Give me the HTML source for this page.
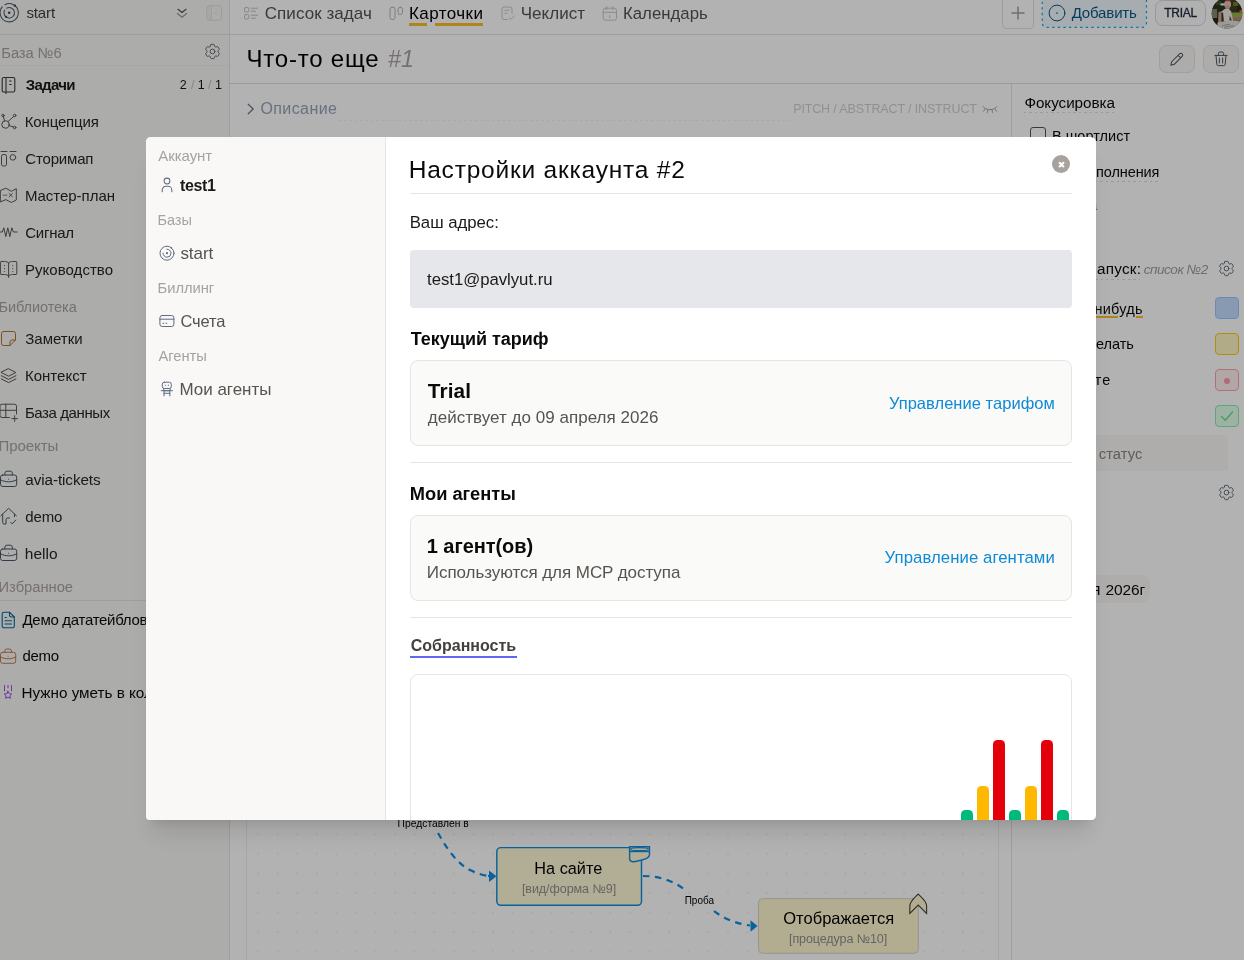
<!DOCTYPE html>
<html lang="ru"><head><meta charset="utf-8"><title>Настройки аккаунта</title>
<style>
*{box-sizing:border-box}
html,body{margin:0;padding:0}
body{width:1244px;height:960px;overflow:hidden;position:relative;background:#fff;font-family:"Liberation Sans",sans-serif;color:#000}
.abs,.t,svg.i{position:absolute}
.t{white-space:pre;line-height:1;margin:0;padding:0}
svg.i{overflow:visible;fill:none;stroke-linecap:round;stroke-linejoin:round}
#app{position:absolute;left:0;top:0;width:1244px;height:960px;overflow:hidden;will-change:transform}
#overlay{position:absolute;left:0;top:0;width:1244px;height:960px;background:rgba(0,0,0,.3)}
#modal{position:absolute;left:146px;top:137px;width:950px;height:683px;background:#fff;border-radius:5px 5.500px 4.500px 4px;box-shadow:0 20px 25px -5px rgba(0,0,0,.1),0 8px 10px -6px rgba(0,0,0,.1);overflow:hidden}
#mtext{position:absolute;left:0;top:0;width:1244px;height:960px;pointer-events:none;will-change:transform}
.dsh{height:1px;background:repeating-linear-gradient(90deg,#e0dedc 0,#e0dedc 2.500px,transparent 2.500px,transparent 5.500px)}
.hr{position:absolute;height:1px;background:#e7e5e4}
.card{position:absolute;left:410px;width:662px;background:#fafaf9;border:1px solid #e7e5e4;border-radius:8px}
</style></head>
<body>
<div id="app">
<svg width="0" height="0" style="position:absolute"><defs><g id="gearp"><path d="M9.594 3.94c.09-.542.56-.94 1.11-.94h2.593c.55 0 1.02.398 1.11.94l.213 1.281c.063.374.313.686.645.87.074.04.147.083.22.127.325.196.72.257 1.075.124l1.217-.456a1.125 1.125 0 0 1 1.37.49l1.296 2.247a1.125 1.125 0 0 1-.26 1.431l-1.003.827c-.293.241-.438.613-.43.992a7.723 7.723 0 0 1 0 .255c-.008.378.137.75.43.991l1.004.827c.424.35.534.955.26 1.43l-1.298 2.247a1.125 1.125 0 0 1-1.369.491l-1.217-.456c-.355-.133-.75-.072-1.076.124a6.47 6.470 0 0 1-.22.128c-.331.183-.581.495-.644.869l-.213 1.281c-.09.543-.56.94-1.11.94h-2.594c-.55 0-1.019-.398-1.11-.94l-.213-1.281c-.062-.374-.312-.686-.644-.87a6.52 6.520 0 0 1-.22-.127c-.325-.196-.72-.257-1.076-.124l-1.217.456a1.125 1.125 0 0 1-1.369-.49l-1.297-2.247a1.125 1.125 0 0 1 .26-1.431l1.004-.827c.292-.24.437-.613.43-.991a6.932 6.932 0 0 1 0-.255c.007-.38-.138-.751-.43-.992l-1.004-.827a1.125 1.125 0 0 1-.26-1.43l1.297-2.247a1.125 1.125 0 0 1 1.37-.491l1.216.456c.356.133.751.072 1.076-.124.072-.044.146-.086.22-.128.332-.183.582-.495.644-.869l.214-1.280Z"/><circle cx="12" cy="12" r="3"/></g></defs></svg>
<!-- sidebar -->
<div class="abs" style="left:0;top:0;width:230px;height:960px;background:#f7f6f4;border-right:1px solid #e4e2e0"></div>
<div class="abs" style="left:0;top:34px;width:1244px;height:1px;background:#e4e2e0"></div>
<div class="abs" style="left:0;top:65px;width:229px;height:1px;background:rgba(0,0,0,.025)"></div>
<div class="abs" style="left:0;top:600px;width:229px;height:1px;background:#e4e2e0"></div>
<div class="abs" style="left:230px;top:83px;width:1014px;height:1px;background:#e0dedc"></div>
<div class="abs" style="left:1011px;top:84px;width:1px;height:876px;background:#e4e2e0"></div>
<!-- canvas -->
<div class="abs" id="canvas" style="left:246px;top:150px;width:753px;height:820px;border:1px solid #eeecea;background-image:radial-gradient(circle,#bcbcbc 0.45px,transparent 0.75px);background-size:19.58px 19.55px;background-position:1.3px 9px"></div>
<!-- sidebar icons -->
<svg class="i" style="left:0;top:0" width="20" height="24" viewBox="0 0 20 24" stroke="#4f5b6e" stroke-width="1.050"><path d="M4.930 4.710A9.100 9.100 0 1 1 2.230 6.900"/><path d="M6.550 8.160A5.300 5.300 0 1 1 4.610 10.100"/><circle cx="9.200" cy="12.750" r="1.250" fill="#334155" stroke="none"/><circle cx="14.900" cy="5.700" r="1.150" fill="#334155" stroke="none"/><circle cx="6.100" cy="16.800" r="1.100" fill="#334155" stroke="none"/></svg>
<svg class="i" style="left:176px;top:8px" width="12" height="11" viewBox="0 0 12 11" stroke-width="1.2"><path d="M2 1.300l4 3.200 4-3.200" stroke="#475569"/><path d="M1.400 5.500l4.600 3.800 4.600-3.800" stroke="#9c9893"/></svg>
<svg class="i" style="left:206px;top:5px" width="16" height="16" viewBox="0 0 16 16" stroke="#e2e0de" stroke-width="1"><path d="M5.500 .7h-2.500a2.300 2.300 0 0 0-2.300 2.300v10a2.300 2.300 0 0 0 2.300 2.300h2.500z" fill="#f1efed" stroke="none"/><rect x=".7" y=".7" width="14.800" height="14.600" rx="2.800"/><path d="M5.500 .7v14.600M10.800 6.200L9.200 8.100l1.600 1.900" stroke-width=".9"/></svg>
<svg class="i" style="left:202.600px;top:42.400px" width="19" height="19" viewBox="0 0 24 24" stroke="#556070" stroke-width="1.150"><use href="#gearp"/></svg>
<!-- notebook -->
<svg class="i" style="left:1px;top:76px" width="16" height="19" viewBox="0 0 16 19" stroke="#403c38" stroke-width="1.100"><rect x="1.2" y="1.5" width="12.6" height="14.5" rx="1.6"/><path d="M5 1.500v16M8.600 5h1.600M8.600 8.500h1.600"/></svg>
<!-- concept -->
<svg class="i" style="left:0;top:113px" width="18" height="18" viewBox="0 0 18 18" stroke="#5c5853" stroke-width="1"><circle cx="5.500" cy="11.5" r="3.7"/><circle cx="3" cy="2.500" r="1.200"/><circle cx="14.6" cy="2.500" r="1.300"/><circle cx="14.600" cy="14.5" r="1.300"/><path d="M3.400 3.700L4.500 7.900M13.700 3.400L8 8.700M9.100 12.500l4.300 1.600"/></svg>
<!-- storymap -->
<svg class="i" style="left:0;top:150px" width="18" height="18" viewBox="0 0 18 18" stroke="#5c5853" stroke-width="1"><path d="M1 1.500h6M10 1.500h6"/><rect x="1.500" y="4.500" width="5" height="11.500" rx="1.800"/><circle cx="12.900" cy="7.400" r="2.800"/></svg>
<!-- master plan -->
<svg class="i" style="left:0;top:187px" width="18" height="18" viewBox="0 0 18 18" stroke="#5c5853" stroke-width="1"><path d="M.7 3.400l5.100-2.200 5.600 3.100 4.900-2.600v11.300l-4.900 2.500-5.600-2.900-5.100 2.200z"/><path d="M3.300 8.200h1.100M5.700 8.200h1.100M9.100 6.500l3.300 3.300M12.400 6.500l-3.300 3.300" stroke-width=".9"/></svg>
<!-- signal -->
<svg class="i" style="left:0;top:226px" width="18" height="12" viewBox="0 0 18 12" stroke="#5c5853" stroke-width="1"><path d="M.3 6h2l1.500-4.200 2 8.800 2-8.800 2 8.800 2-8.800L13.500 6h3.700"/></svg>
<!-- book -->
<svg class="i" style="left:0;top:260px" width="18" height="19" viewBox="0 0 18 19" stroke="#5c5853" stroke-width="1"><path d="M8.600 3v14.500M8.600 3c-1-1-2.400-1.500-4-1.500h-3.500c-.4 0-.7.300-.7.700v11.600c0 .400.300.700.700.700h3.500c1.600 0 3 .5 4 1.500M8.600 3c1-1 2.400-1.500 4-1.500h3.500c.4 0 .7.300.7.700v11.600c0 .400-.3.700-.7.700h-3.500c-1.600 0-3 .5-4 1.500"/><path d="M4.500 5.500v.1M4.500 8.500v.1M4.500 11.500v.1M12.800 5.500v.1M12.800 8.500v.1M12.800 11.500v.1" stroke-width="1.200"/></svg>
<!-- notes -->
<svg class="i" style="left:0;top:330px" width="18" height="18" viewBox="0 0 18 18" stroke="#b4712f" stroke-width="1"><path d="M3.500 1.500h10a2 2 0 0 1 2 2v6.500l-5.500 5.500h-6.500a2 2 0 0 1-2-2v-10a2 2 0 0 1 2-2z"/><path d="M15.500 10h-3.500a2 2 0 0 0-2 2v3.500"/></svg>
<!-- layers -->
<svg class="i" style="left:0;top:367px" width="18" height="18" viewBox="0 0 18 18" stroke="#5c5853" stroke-width="1"><path d="M8.600 1.800l7.300 3.700-7.300 3.700-7.300-3.700z"/><path d="M1.300 8.700l7.300 3.700 7.300-3.700M1.300 11.900l7.300 3.700 7.300-3.700"/></svg>
<!-- table plus -->
<svg class="i" style="left:0;top:403px" width="19" height="20" viewBox="0 0 19 20" stroke="#57534e" stroke-width=".95"><path d="M16.500 11v-7.800a2 2 0 0 0-2-2h-12.500a2 2 0 0 0-2 2v9.300a2 2 0 0 0 2 2h7.500M0 7.300h16.500M5.800 1.200v13.300M11.800 15.600h5.700M14.650 12.700v5.800"/></svg>
<!-- briefcase 1 -->
<svg class="i" style="left:0;top:470px" width="18" height="18" viewBox="0 0 18 18" stroke="#475569" stroke-width="1"><rect x=".5" y="5" width="16.200" height="11.500" rx="2.200"/><path d="M4.900 5v-1.800a2 2 0 0 1 2-2h3.400a2 2 0 0 1 2 2v1.800M.5 9.800c2.500 1.300 5.200 2 8.100 2s5.600-.7 8.100-2M8.600 9.200v.1"/></svg>
<!-- home -->
<svg class="i" style="left:0;top:507px" width="18" height="19" viewBox="0 0 18 19" stroke="#475569" stroke-width="1"><path d="M.8 8.800l7.800-7.500 7.800 7.500M2.700 7.200v8.300a1.500 1.500 0 0 0 1.500 1.500h1.800v-4.500a1.500 1.500 0 0 1 1.500-1.500h2M10.500 15.200l1.700 1.700 3.500-3.800M14.500 7.200v2.500"/></svg>
<!-- briefcase 2 -->
<svg class="i" style="left:0;top:544.300px" width="18" height="18" viewBox="0 0 18 18" stroke="#475569" stroke-width="1"><rect x=".5" y="5" width="16.200" height="11.500" rx="2.200"/><path d="M4.900 5v-1.800a2 2 0 0 1 2-2h3.400a2 2 0 0 1 2 2v1.800M.5 9.800c2.500 1.300 5.200 2 8.100 2s5.600-.7 8.100-2M8.600 9.200v.1"/></svg>
<!-- doc blue -->
<svg class="i" style="left:1px;top:611px" width="16" height="18" viewBox="0 0 16 18" stroke="#0369a1" stroke-width="1.100"><path d="M3 1.200h5.500l4.800 4.800v9a1.800 1.800 0 0 1-1.800 1.800h-8.500a1.800 1.800 0 0 1-1.800-1.800v-12a1.800 1.800 0 0 1 1.800-1.800z"/><path d="M8.500 1.200v3a1.800 1.800 0 0 0 1.800 1.800h3M4 6.500h1.500M4 9.800h6.500M4 13h6.500"/></svg>
<!-- briefcase brown -->
<svg class="i" style="left:0;top:648px" width="17" height="17" viewBox="0 0 17 17" stroke="#c07a52" stroke-width="1"><rect x=".5" y="4.300" width="15.200" height="11" rx="2.200"/><path d="M4.800 4.300v-1.300a2 2 0 0 1 2-2h2.600a2 2 0 0 1 2 2v1.300M.5 9c2.400 1.200 4.900 1.800 7.600 1.800s5.200-.6 7.600-1.800M8.100 8.200v.1"/></svg>
<!-- medal purple -->
<svg class="i" style="left:3px;top:684px" width="10" height="16" viewBox="0 0 10 16" stroke="#a24bf0" stroke-width="1"><path d="M1.500 1.500v5.300M5 1.500v2.200M8.500 1.500v5.300"/><path d="M5 7.200l1.200 2.400 2.600.4-1.900 1.800.5 2.600-2.400-1.300-2.400 1.300.5-2.600-1.900-1.800 2.600-.4z"/></svg>
<!-- header icons -->
<svg class="i" style="left:244px;top:7px" width="15" height="13" viewBox="0 0 15 13" stroke="#c4c0bb" stroke-width="1"><rect x=".5" y=".6" width="4.300" height="4.300" rx="1"/><rect x=".5" y="7.600" width="4.300" height="4.300" rx="1"/><path d="M7.400 1.200h6.300M7.400 4.200h4M7.400 8.200h6.300M7.400 11.200h4"/></svg>
<svg class="i" style="left:389px;top:6px" width="15" height="15" viewBox="0 0 15 15" stroke="#b8b4af" stroke-width="1"><rect x="1" y="1.300" width="5" height="12.200" rx="2"/><rect x="9.100" y="1.300" width="4.400" height="7.200" rx="2"/></svg>
<svg class="i" style="left:501px;top:6px" width="15" height="15" viewBox="0 0 15 15" stroke="#cbc7c3" stroke-width="1"><path d="M11 7.500v-4.500a2 2 0 0 0-2-2h-6a2 2 0 0 0-2 2v8.500a2 2 0 0 0 2 2h3.500M3.800 4.300h4.400M3.800 7.200h2.400M8.300 11.700l1.700 1.700 3.300-3.500"/></svg>
<svg class="i" style="left:602px;top:6px" width="16" height="15" viewBox="0 0 16 15" stroke="#cbc7c3" stroke-width="1"><rect x="1.200" y="2.200" width="13.300" height="12" rx="2.200"/><path d="M1.200 6.300h13.300M4.800 .6v3M10.900 .6v3M7.800 9.500v2"/></svg>
<div class="abs" style="left:409px;top:23px;width:18px;height:2.500px;background:#fbbf24"></div>
<div class="abs" style="left:435px;top:23px;width:48px;height:2.500px;background:#fbbf24"></div>
<!-- plus btn -->
<div class="abs" style="left:1002px;top:-8px;width:32.200px;height:36.900px;border:1px solid #e3e1de;border-radius:4px;background:transparent"></div>
<svg class="i" style="left:1012px;top:7px" width="12" height="12" viewBox="0 0 12 12" stroke="#9aa0aa" stroke-width="1.500" stroke-linecap="butt"><path d="M6 0v12M0 6h12"/></svg>
<!-- add btn -->
<svg class="abs" style="left:1036px;top:-10px;overflow:visible" width="116" height="44" viewBox="1036 -10 116 44"><rect x="1042.200" y="-8" width="104.300" height="35.400" rx="4.500" fill="#eff7fc" stroke="#00aaf5" stroke-width="1.200" stroke-dasharray="2.300 3.300" stroke-dashoffset="1"/></svg>
<svg class="i" style="left:1047.800px;top:4px" width="18" height="18" viewBox="0 0 18 18" stroke="#075985" stroke-width="1"><circle cx="9" cy="9" r="7.900"/><circle cx="9" cy="9.100" r=".8" fill="#075985" stroke="none"/></svg>
<!-- trial -->
<div class="abs" style="left:1155.300px;top:0;width:51.200px;height:25.700px;border:1px solid #d4d8e2;border-radius:7.500px;background:#fdfdfd"></div>
<!-- avatar -->
<svg class="abs" style="left:1211px;top:-3px" width="33" height="33" viewBox="1211 -3 33 33"><defs><clipPath id="av"><circle cx="1227" cy="13.300" r="15.300"/></clipPath></defs><g clip-path="url(#av)"><rect x="1211" y="-3" width="33" height="33" fill="#3a3f28"/><g style="filter:blur(.55px)"><rect x="1211" y="-3" width="14" height="14" fill="#2c3323"/><rect x="1216" y="1" width="5" height="4" fill="#46552a"/><rect x="1231" y="-3" width="13" height="16" fill="#3b3d24"/><rect x="1233" y="2" width="5" height="4" fill="#6b7a2e"/><rect x="1237" y="6" width="4" height="5" fill="#2a2a1c"/><rect x="1232" y="12.500" width="11" height="4.500" fill="#93b04a"/><rect x="1232" y="17" width="11" height="3.800" fill="#b08a76"/><rect x="1239.500" y="10.200" width="3" height="2.500" fill="#ff6420"/><rect x="1211" y="9" width="6" height="10" fill="#8b8170"/><rect x="1213" y="18" width="7" height="9" fill="#2b2119"/><rect x="1220.500" y="3.300" width="4.500" height="2.200" fill="#f0f0f0"/><rect x="1224.300" y=".5" width="6.700" height="7.500" rx="3" fill="#dcc6ba"/><rect x="1225.500" y="5.500" width="4" height="3.500" fill="#cbb09f"/><rect x="1225.800" y="-3" width="4.500" height="4.300" fill="#e6392f"/><path d="M1221.500 11.500l3-2.500h4.500l2.500 3 1.500 9h-12z" fill="#eee8e2"/><path d="M1218.500 12.500l3-1.500 1 13h-4.500z" fill="#c4a58c"/><path d="M1221.500 13l1.500-.5 1 10.500h-2.500z" fill="#3d3027"/><path d="M1229.800 15.500l2.500 6h-3z" fill="#54463a"/><path d="M1217.500 22.500l12-2.300 12 1.300v9h-24z" fill="#dededa"/><path d="M1222 25.500l8-1.200M1224 27.200l10-1.500" stroke="#8a8a86" stroke-width=".7"/></g></g></svg>
<!-- edit / trash -->
<div class="abs" style="left:1159.400px;top:45.200px;width:35.300px;height:27.600px;border:1px solid #e1e4ea;border-radius:7px;background:#f8f6f4"></div>
<svg class="i" style="left:1167.600px;top:51.700px" width="16" height="16" viewBox="-8 -8 16 16" stroke="#4b5563" stroke-width="1"><g transform="rotate(45)"><path d="M-1.850 -6.900a1.850 1.850 0 0 1 3.700 0v11.200l-1.850 3-1.850-3zM-1.850 -4.800h3.700"/></g></svg>
<div class="abs" style="left:1203.300px;top:45.200px;width:35.300px;height:27.600px;border:1px solid #e1e4ea;border-radius:7px;background:#f8f6f4"></div>
<svg class="i" style="left:1213px;top:50px" width="16" height="18" viewBox="0 0 16 18" stroke="#4b5563" stroke-width="1"><path d="M1.900 5.400h12.200M5.400 5.400v-1.900a1.500 1.500 0 0 1 1.500-1.500h2.200a1.500 1.500 0 0 1 1.500 1.500v1.900M3 5.400l.8 8.800a1.500 1.500 0 0 0 1.500 1.400h5.400a1.500 1.500 0 0 0 1.500-1.400l.8-8.800M6.350 8v5M9.650 8v5" /></svg>
<!-- description row -->
<svg class="i" style="left:247px;top:103px" width="8" height="12" viewBox="0 0 8 12" stroke="#64748b" stroke-width="1.200"><path d="M1.200 1.200l5 4.800-5 4.800"/></svg>
<div class="abs dsh" style="left:338px;top:120px;width:452px;opacity:.4"></div>
<svg class="i" style="left:982px;top:105px" width="16" height="9" viewBox="0 0 16 9" stroke="#9aa5b8" stroke-width="1"><path d="M1 1.500c1.500 2 4 3.200 7 3.200s5.500-1.200 7-3.200M3 4l-1.500 2.200M6 5l-.6 2.500M10 5l.6 2.500M13 4l1.500 2.200"/></svg>
<!-- right panel -->
<div class="abs dsh" style="left:1024px;top:111.500px;width:92px"></div>
<div class="abs" style="left:1030px;top:127px;width:16px;height:16px;border:1.200px solid #475569;border-radius:3px"></div>
<div class="abs dsh" style="left:1040px;top:181px;width:119px"></div>
<div class="abs dsh" style="left:1084px;top:278.500px;width:56px"></div>
<div class="abs" style="left:1080px;top:316px;width:38px;height:2px;background:#fbbf24"></div>
<div class="abs" style="left:1136px;top:316px;width:7px;height:2px;background:#fbbf24"></div>
<svg class="i" style="left:1216.700px;top:259.400px" width="19" height="19" viewBox="0 0 24 24" stroke="#556070" stroke-width="1.150"><use href="#gearp"/></svg>
<svg class="i" style="left:1216.500px;top:483.300px" width="19" height="19" viewBox="0 0 24 24" stroke="#556070" stroke-width="1.150"><use href="#gearp"/></svg>
<div class="abs" style="left:1215px;top:297px;width:24px;height:22px;border:1.300px solid #9fc6ff;border-radius:4px;background:#c3dcff"></div>
<div class="abs" style="left:1215px;top:333px;width:24px;height:22px;border:1.300px solid #facc15;border-radius:4px;background:#fff5c2"></div>
<div class="abs" style="left:1215px;top:369px;width:24px;height:22px;border:1.300px solid #fda4af;border-radius:4px;background:#ffeef0"></div>
<div class="abs" style="left:1224px;top:378px;width:6px;height:6px;border-radius:3px;background:#fb9aaa"></div>
<div class="abs" style="left:1215px;top:405px;width:24px;height:22px;border:1.300px solid #86efac;border-radius:4px;background:#e0ffe8"></div>
<svg class="i" style="left:1220px;top:410px" width="14" height="12" viewBox="0 0 14 12" stroke="#6fdc8c" stroke-width="1.400"><path d="M1.500 6.500l3.800 3.800 7.200-8.300"/></svg>
<div class="abs" style="left:1040px;top:435px;width:188px;height:36px;background:#f9f8f6;border-radius:3px"></div>
<div class="abs" style="left:1040px;top:575px;width:110px;height:28px;background:#f9f8f7;border-radius:9px"></div>
<!-- canvas nodes -->
<svg class="abs" style="left:230px;top:800px;overflow:visible" width="790" height="160" viewBox="230 800 790 160" fill="none">
<path d="M438 833c8 14 18 30 32 37 8 4 16 6 22 6.300" stroke="#0f8de0" stroke-width="2.200" stroke-dasharray="6.500 5.500"/>
<path d="M489 870.500l7.500 5.700-7.500 5.700z" fill="#0f8de0"/>
<path d="M488 876h5" stroke="#0f8de0" stroke-width="2"/>
<rect x="496.800" y="847.600" width="144.700" height="57.700" rx="4" fill="#fff9d6" stroke="#0f8de0" stroke-width="1.450"/>
<path d="M629.600 846.700h19.900v7.600c0 3.400-4 5.100-8.500 5.900-3.500.7-6 1.900-8.300 1.500a3.200 3.200 0 0 1-3.100-3.200z" fill="#fff9d6" stroke="#0f8de0" stroke-width="1.400"/>
<ellipse cx="639.550" cy="849.200" rx="8.800" ry="1.500" stroke="#0f8de0" stroke-width="1.200"/><path d="M629.600 851.500h19.900" stroke="#0f8de0" stroke-width="1.400"/>
<path d="M643 876c14 0 30 4 42 14" stroke="#0f8de0" stroke-width="2.200" stroke-dasharray="6.500 5.500"/>
<path d="M714 911c10 8 24 13 36 14.500" stroke="#0f8de0" stroke-width="2.200" stroke-dasharray="6.500 5.500"/>
<path d="M750.500 920.300l7 5.700-7 5.700z" fill="#0f8de0"/>
<rect x="758.500" y="898.700" width="159.800" height="54.600" rx="4" fill="#fff8d0" stroke="#d6d4cc" stroke-width="1"/>
<path d="M918.200 894.100c2.800 3 8.400 6.800 8.400 12v7.300l-8.400-8.400-8.400 8.400v-7.300c0-5.200 5.600-9 8.400-12z" fill="#fff8d0" stroke="#44403c" stroke-width="1.100" stroke-linejoin="miter"/>
</svg>

<span class="t" style="left:26.40px;top:5.00px;font-size:15.0px;color:#44403c;letter-spacing:-0.101px;">start</span>
<span class="t" style="left:1.30px;top:46.00px;font-size:14.75px;color:#a8a29e;letter-spacing:-0.084px;">База №6</span>
<span class="t" style="left:25.70px;top:77.00px;font-size:15.0px;color:#1c1917;font-weight:700;letter-spacing:-0.688px;">Задачи</span>
<span class="t" style="left:179.70px;top:79.00px;font-size:12.5px;color:#1c1917;letter-spacing:-0.300px;">2</span>
<span class="t" style="left:191.00px;top:79.00px;font-size:12.5px;color:#c4c0bc;letter-spacing:-0.500px;">/</span>
<span class="t" style="left:197.80px;top:79.00px;font-size:12.5px;color:#1c1917;letter-spacing:-2.300px;">1</span>
<span class="t" style="left:208.00px;top:79.00px;font-size:12.5px;color:#c4c0bc;letter-spacing:-0.300px;">/</span>
<span class="t" style="left:215.00px;top:79.00px;font-size:12.5px;color:#1c1917;letter-spacing:-2.000px;">1</span>
<span class="t" style="left:24.70px;top:114.00px;font-size:15.0px;color:#292524;letter-spacing:-0.140px;">Концепция</span>
<span class="t" style="left:25.30px;top:151.00px;font-size:15.0px;color:#292524;letter-spacing:-0.179px;">Сторимап</span>
<span class="t" style="left:24.90px;top:188.00px;font-size:15.0px;color:#292524;letter-spacing:-0.030px;">Мастер-план</span>
<span class="t" style="left:25.30px;top:225.00px;font-size:15.0px;color:#292524;letter-spacing:-0.262px;">Сигнал</span>
<span class="t" style="left:24.90px;top:262.00px;font-size:15.0px;color:#292524;letter-spacing:0.049px;">Руководство</span>
<span class="t" style="left:-1.50px;top:300.00px;font-size:14.5px;color:#a8a29e;letter-spacing:-0.064px;">Библиотека</span>
<span class="t" style="left:25.30px;top:331.00px;font-size:15.0px;color:#292524;letter-spacing:0.001px;">Заметки</span>
<span class="t" style="left:24.90px;top:368.00px;font-size:15.0px;color:#292524;letter-spacing:0.023px;">Контекст</span>
<span class="t" style="left:24.90px;top:405.00px;font-size:15.0px;color:#292524;letter-spacing:-0.405px;">База данных</span>
<span class="t" style="left:-1.50px;top:438.00px;font-size:15.0px;color:#a8a29e;letter-spacing:-0.068px;">Проекты</span>
<span class="t" style="left:25.30px;top:472.00px;font-size:15.25px;color:#292524;letter-spacing:-0.086px;">avia-tickets</span>
<span class="t" style="left:25.30px;top:509.00px;font-size:15.0px;color:#292524;letter-spacing:-0.160px;">demo</span>
<span class="t" style="left:24.80px;top:546.00px;font-size:15.5px;color:#292524;letter-spacing:0.018px;">hello</span>
<span class="t" style="left:-1.50px;top:580.00px;font-size:14.75px;color:#a8a29e;letter-spacing:-0.031px;">Избранное</span>
<span class="t" style="left:22.50px;top:612.00px;font-size:15.0px;color:#0c0a09;letter-spacing:-0.294px;">Демо дататейблов</span>
<span class="t" style="left:22.50px;top:648.00px;font-size:15.0px;color:#0c0a09;letter-spacing:-0.327px;">demo</span>
<span class="t" style="left:21.50px;top:685.00px;font-size:15.25px;color:#0c0a09;letter-spacing:-0.004px;">Нужно уметь в кол</span>
<span class="t" style="left:264.70px;top:5.00px;font-size:17.0px;color:#57534e;letter-spacing:0.070px;">Список задач</span>
<span class="t" style="left:409.00px;top:5.00px;font-size:17.0px;color:#000;letter-spacing:0.427px;">Карточки</span>
<span class="t" style="left:520.70px;top:5.00px;font-size:17.0px;color:#57534e;letter-spacing:0.045px;">Чеклист</span>
<span class="t" style="left:623.00px;top:6.00px;font-size:16.75px;color:#57534e;letter-spacing:0.023px;">Календарь</span>
<span class="t" style="left:1071.65px;top:5.00px;font-size:15px;color:#075985;letter-spacing:-0.147px;">Добавить</span>
<span class="t" style="left:1164.20px;top:7.00px;font-size:12.0px;color:#1e293b;letter-spacing:-0.233px;-webkit-text-stroke:.3px #1e293b">TRIAL</span>
<span class="t" style="left:246.40px;top:47.00px;font-size:24.0px;color:#000;letter-spacing:0.809px;">Что-то еще</span>
<span class="t" style="left:388.00px;top:48.00px;font-size:23.25px;color:#a8a29e;font-style:italic;letter-spacing:0.069px;">#1</span>
<span class="t" style="left:260.40px;top:101.00px;font-size:16.0px;color:#94a3b8;letter-spacing:0.412px;">Описание</span>
<span class="t" style="left:793.20px;top:103.00px;font-size:12.5px;color:#d2cfcc;letter-spacing:-0.137px;">PITCH / ABSTRACT / INSTRUCT</span>
<span class="t" style="left:1024.40px;top:95.00px;font-size:15.25px;color:#0c0a09;letter-spacing:-0.049px;">Фокусировка</span>
<span class="t" style="left:1051.90px;top:129.00px;font-size:14.5px;color:#0c0a09;letter-spacing:0.036px;">В шортлист</span>
<span class="t" style="left:1096.00px;top:165.00px;font-size:14.5px;color:#0c0a09;letter-spacing:-0.091px;">полнения</span>
<span class="t" style="left:1089.00px;top:197.00px;font-size:15.0px;color:#8a8682;">а</span>
<span class="t" style="left:1097.00px;top:261.00px;font-size:15.25px;color:#0c0a09;letter-spacing:0.242px;">апуск:</span>
<span class="t" style="left:1143.75px;top:263.00px;font-size:13.5px;color:#a19b96;font-style:italic;letter-spacing:-0.461px;">список №2</span>
<span class="t" style="left:1094.50px;top:302.00px;font-size:14.5px;color:#0c0a09;letter-spacing:0.235px;">нибудь</span>
<span class="t" style="left:1095.90px;top:337.00px;font-size:14.5px;color:#0c0a09;letter-spacing:-0.008px;">елать</span>
<span class="t" style="left:1094.40px;top:372.00px;font-size:15.0px;color:#0c0a09;">т</span>
<span class="t" style="left:1102.30px;top:373.00px;font-size:14.5px;color:#0c0a09;letter-spacing:-2.000px;">е</span>
<span class="t" style="left:1098.80px;top:447.00px;font-size:14.75px;color:#8a8682;letter-spacing:0.045px;">статус</span>
<span class="t" style="left:1091.70px;top:582.00px;font-size:16.0px;color:#0c0a09;">я</span>
<span class="t" style="left:1105.50px;top:582.00px;font-size:15.5px;color:#0c0a09;letter-spacing:-0.095px;">2026г</span>
<span class="t" style="left:397.60px;top:819.00px;font-size:10.25px;color:#000;letter-spacing:0.031px;">Представлен в</span>
<span class="t" style="left:534.30px;top:860.00px;font-size:16.25px;color:#000;letter-spacing:0.016px;">На сайте</span>
<span class="t" style="left:521.90px;top:883.00px;font-size:12.5px;color:#8f8f8f;letter-spacing:-0.049px;">[вид/форма №9]</span>
<span class="t" style="left:684.70px;top:896.00px;font-size:10.0px;color:#000;letter-spacing:-0.027px;">Проба</span>
<span class="t" style="left:783.20px;top:910.00px;font-size:16.5px;color:#000;letter-spacing:0.032px;">Отображается</span>
<span class="t" style="left:789.00px;top:933.00px;font-size:12.5px;color:#8f8f8f;letter-spacing:-0.088px;">[процедура №10]</span>
</div>
<div id="overlay"></div>
<div id="modal">
<!-- coordinates relative to modal (146,137) -->
<div class="abs" style="left:0;top:0;width:240px;height:683px;background:#f9f8f7;border-right:1px solid #e7e5e4"></div>
<!-- user icon -->
<svg class="i" style="left:14px;top:40px" width="14" height="16" viewBox="0 0 14 16" stroke="#5f6b80" stroke-width="1.050"><circle cx="7" cy="4" r="2.900"/><path d="M2.200 14.700v-1.600a3.800 3.800 0 0 1 3.800-3.800h2a3.800 3.800 0 0 1 3.800 3.800v1.600"/></svg>
<!-- target icon -->
<svg class="i" style="left:13px;top:108px" width="16" height="16" viewBox="0 0 16 16" stroke="#5f6b80" stroke-width="1"><circle cx="8" cy="8.200" r="7"/><path d="M8 4.200a4 4 0 1 1-4 4"/><circle cx="8" cy="8.200" r="1.100" fill="#5f6b80" stroke="none"/><circle cx="12.300" cy="2.900" r=".8" fill="#5f6b80" stroke="none"/></svg>
<!-- card icon -->
<svg class="i" style="left:13px;top:177px" width="16" height="14" viewBox="0 0 16 14" stroke="#5f6b80" stroke-width="1"><rect x=".9" y="1.500" width="14" height="11" rx="2.300"/><path d="M.9 5.200h14M4 9.300h.8M7 9.300h.8"/></svg>
<!-- robot icon -->
<svg class="i" style="left:14px;top:244px" width="14" height="16" viewBox="0 0 14 16" stroke="#5f6b80" stroke-width="1"><rect x="2.300" y="1.200" width="9" height="6.300" rx="2"/><path d="M5.300 4.200v.3M8.400 4.200v.3M3.700 7.500v2.200h6.400v-2.200M1.200 9.700h11.200M4 9.700v5.200M9.800 9.700v5.200M4 12.300h5.800"/></svg>
<!-- close -->
<div class="abs" style="left:906px;top:18px;width:18px;height:18px;border-radius:9px;background:#a8a29e"></div>
<svg class="i" style="left:911.500px;top:23.500px" width="7" height="7" viewBox="0 0 7 7" stroke="#fff" stroke-width="2" stroke-linecap="butt"><path d="M1.600 1.700l3.800 3.800M5.400 1.700l-3.800 3.800"/></svg>
<!-- title hr -->
<div class="hr" style="left:264px;top:56px;width:662px"></div>
<!-- email box -->
<div class="abs" style="left:264px;top:113px;width:662px;height:57.500px;background:#e5e7eb;border-radius:4px"></div>
<!-- tariff card -->
<div class="card" style="left:264px;top:223px;height:85.500px"></div>
<div class="hr" style="left:264px;top:325px;width:662px"></div>
<div class="card" style="left:264px;top:378px;height:85.500px"></div>
<div class="hr" style="left:264px;top:480px;width:662px"></div>
<!-- underline sobrannost -->
<div class="abs" style="left:264px;top:518.500px;width:107px;height:2px;background:#6366f1"></div>
<!-- chart card -->
<div class="abs" style="left:264px;top:537px;width:662px;height:200px;border:1px solid #e7e5e4;border-radius:8px;background:#fff"></div>
<div class="abs" style="left:815px;top:673px;width:12px;height:20px;border-radius:4.500px 4.500px 0 0;background:#00ba7c"></div>
<div class="abs" style="left:831px;top:649px;width:12px;height:44px;border-radius:4.500px 4.500px 0 0;background:#ffb800"></div>
<div class="abs" style="left:847px;top:603px;width:12px;height:90px;border-radius:4.500px 4.500px 0 0;background:#e4000b"></div>
<div class="abs" style="left:863px;top:673px;width:12px;height:20px;border-radius:4.500px 4.500px 0 0;background:#00ba7c"></div>
<div class="abs" style="left:879px;top:649px;width:12px;height:44px;border-radius:4.500px 4.500px 0 0;background:#ffb800"></div>
<div class="abs" style="left:895px;top:603px;width:12px;height:90px;border-radius:4.500px 4.500px 0 0;background:#e4000b"></div>
<div class="abs" style="left:911px;top:673px;width:12px;height:20px;border-radius:4.500px 4.500px 0 0;background:#00ba7c"></div>

</div>
<div id="mtext">
<span class="t" style="left:158.30px;top:148.00px;font-size:15.0px;color:#a8a29e;letter-spacing:-0.069px;">Аккаунт</span>
<span class="t" style="left:180.00px;top:178.00px;font-size:16.0px;color:#1c1917;font-weight:700;letter-spacing:-0.363px;">test1</span>
<span class="t" style="left:157.60px;top:213.00px;font-size:14.5px;color:#a8a29e;letter-spacing:-0.088px;">Базы</span>
<span class="t" style="left:180.40px;top:245.00px;font-size:17.0px;color:#57534e;letter-spacing:-0.035px;">start</span>
<span class="t" style="left:157.60px;top:281.00px;font-size:14.75px;color:#a8a29e;letter-spacing:-0.053px;">Биллинг</span>
<span class="t" style="left:180.40px;top:313.00px;font-size:16.5px;color:#57534e;letter-spacing:-0.132px;">Счета</span>
<span class="t" style="left:158.60px;top:349.00px;font-size:14.75px;color:#a8a29e;letter-spacing:-0.060px;">Агенты</span>
<span class="t" style="left:179.40px;top:381.00px;font-size:17.0px;color:#57534e;letter-spacing:-0.004px;">Мои агенты</span>
<span class="t" style="left:408.70px;top:158.00px;font-size:24.5px;color:#0c0a09;letter-spacing:0.791px;">Настройки аккаунта #2</span>
<span class="t" style="left:409.70px;top:215.00px;font-size:16.75px;color:#1c1917;letter-spacing:-0.019px;">Ваш адрес:</span>
<span class="t" style="left:427.00px;top:272.00px;font-size:16.75px;color:#1c1917;letter-spacing:-0.028px;">test1@pavlyut.ru</span>
<span class="t" style="left:410.80px;top:330.00px;font-size:18.0px;color:#0c0a09;font-weight:700;letter-spacing:-0.036px;">Текущий тариф</span>
<span class="t" style="left:427.80px;top:381.00px;font-size:20.75px;color:#0c0a09;font-weight:700;letter-spacing:0.122px;">Trial</span>
<span class="t" style="left:427.80px;top:409.00px;font-size:17.0px;color:#57534e;letter-spacing:0.028px;">действует до 09 апреля 2026</span>
<span class="t" style="left:888.90px;top:395.00px;font-size:16.5px;color:#0f8ad6;letter-spacing:0.035px;">Управление тарифом</span>
<span class="t" style="left:409.80px;top:485.00px;font-size:18.25px;color:#0c0a09;font-weight:700;letter-spacing:-0.011px;">Мои агенты</span>
<span class="t" style="left:426.80px;top:536.00px;font-size:20.0px;color:#0c0a09;font-weight:700;letter-spacing:-0.060px;">1 агент(ов)</span>
<span class="t" style="left:426.80px;top:564.00px;font-size:17.0px;color:#57534e;letter-spacing:-0.063px;">Используются для MCP доступа</span>
<span class="t" style="left:884.60px;top:550.00px;font-size:16.75px;color:#0f8ad6;letter-spacing:0.061px;">Управление агентами</span>
<span class="t" style="left:410.80px;top:638.00px;font-size:16.0px;color:#44403c;font-weight:700;letter-spacing:-0.001px;">Собранность</span>
</div>
</body></html>
